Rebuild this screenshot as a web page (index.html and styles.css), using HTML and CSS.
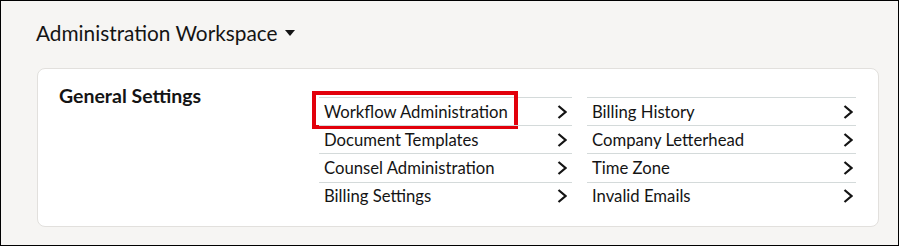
FILE: index.html
```html
<!DOCTYPE html>
<html lang="en">
<head>
<meta charset="utf-8">
<title>Administration Workspace</title>
<link rel="stylesheet" href="styles.css">
</head>
<body>
<div class="frame">
  <header class="header">
    <h1 class="title">Administration Workspace
      <svg class="caret" width="10" height="6" viewBox="0 0 10 6"><path d="M0 0H10L5 6Z" fill="#141414"/></svg>
    </h1>
  </header>
  <section class="card">
    <h2 class="card-title">General Settings</h2>
    <ul class="list list-a">
      <li class="row highlighted"><span class="label">Workflow Administration</span><svg class="chev" width="10" height="16" viewBox="0 0 10 16"><path d="M1.5 2L8.5 8L1.5 14" fill="none" stroke="#141414" stroke-width="2.2"/></svg><span class="mark"></span></li>
      <li class="row"><span class="label">Document Templates</span><svg class="chev" width="10" height="16" viewBox="0 0 10 16"><path d="M1.5 2L8.5 8L1.5 14" fill="none" stroke="#141414" stroke-width="2.2"/></svg></li>
      <li class="row"><span class="label">Counsel Administration</span><svg class="chev" width="10" height="16" viewBox="0 0 10 16"><path d="M1.5 2L8.5 8L1.5 14" fill="none" stroke="#141414" stroke-width="2.2"/></svg></li>
      <li class="row"><span class="label">Billing Settings</span><svg class="chev" width="10" height="16" viewBox="0 0 10 16"><path d="M1.5 2L8.5 8L1.5 14" fill="none" stroke="#141414" stroke-width="2.2"/></svg></li>
    </ul>
    <ul class="list list-b">
      <li class="row"><span class="label">Billing History</span><svg class="chev" width="10" height="16" viewBox="0 0 10 16"><path d="M1.5 2L8.5 8L1.5 14" fill="none" stroke="#141414" stroke-width="2.2"/></svg></li>
      <li class="row"><span class="label">Company Letterhead</span><svg class="chev" width="10" height="16" viewBox="0 0 10 16"><path d="M1.5 2L8.5 8L1.5 14" fill="none" stroke="#141414" stroke-width="2.2"/></svg></li>
      <li class="row"><span class="label">Time Zone</span><svg class="chev" width="10" height="16" viewBox="0 0 10 16"><path d="M1.5 2L8.5 8L1.5 14" fill="none" stroke="#141414" stroke-width="2.2"/></svg></li>
      <li class="row"><span class="label">Invalid Emails</span><svg class="chev" width="10" height="16" viewBox="0 0 10 16"><path d="M1.5 2L8.5 8L1.5 14" fill="none" stroke="#141414" stroke-width="2.2"/></svg></li>
    </ul>
  </section>
</div>
</body>
</html>
```
FILE: styles.css
```css
* { box-sizing: border-box; }
html, body { margin: 0; padding: 0; background: #fff; }
body { font-family: Lato, "Liberation Sans", sans-serif; color: #141414; }
.frame {
  width: 899px;
  height: 246px;
  border: 1px solid #000;
  background: #f6f5f3;
  padding: 19px 0 0 35px;
}
.header { height: 48px; }
.title {
  margin: 0;
  font-size: 20.8px;
  font-weight: 400;
  line-height: 25px;
  display: flex;
  align-items: center;
  gap: 7px;
}
.caret { margin-top: 1px; }
.card {
  margin-left: 1px;
  width: 842px;
  height: 159px;
  background: #fff;
  border: 1px solid #e2e0dd;
  border-radius: 8px;
  display: grid;
  grid-template-columns: 245px 253px 269px;
  column-gap: 15px;
  padding: 28px 0 0 21px;
  align-items: start;
}
.card-title {
  margin: -13px 0 0 0;
  font-size: 19.5px;
  font-weight: 700;
  line-height: 24px;
}
.list { list-style: none; margin: 0; padding: 0; }
.row {
  position: relative;
  display: flex;
  align-items: center;
  justify-content: space-between;
  height: 28.4px;
  padding: 0 5px 0 5px;
  border-top: 1px solid #d4dada;
  font-size: 16.7px;
}
.list-b .row { padding-right: 3px; }
.row:first-child { height: 28px; }
.label { line-height: 20px; }
.chev { flex: none; }
.mark {
  position: absolute;
  left: -7px;
  top: -7px;
  width: 206px;
  height: 38px;
  border: 4px solid #e2000b;
}
```
